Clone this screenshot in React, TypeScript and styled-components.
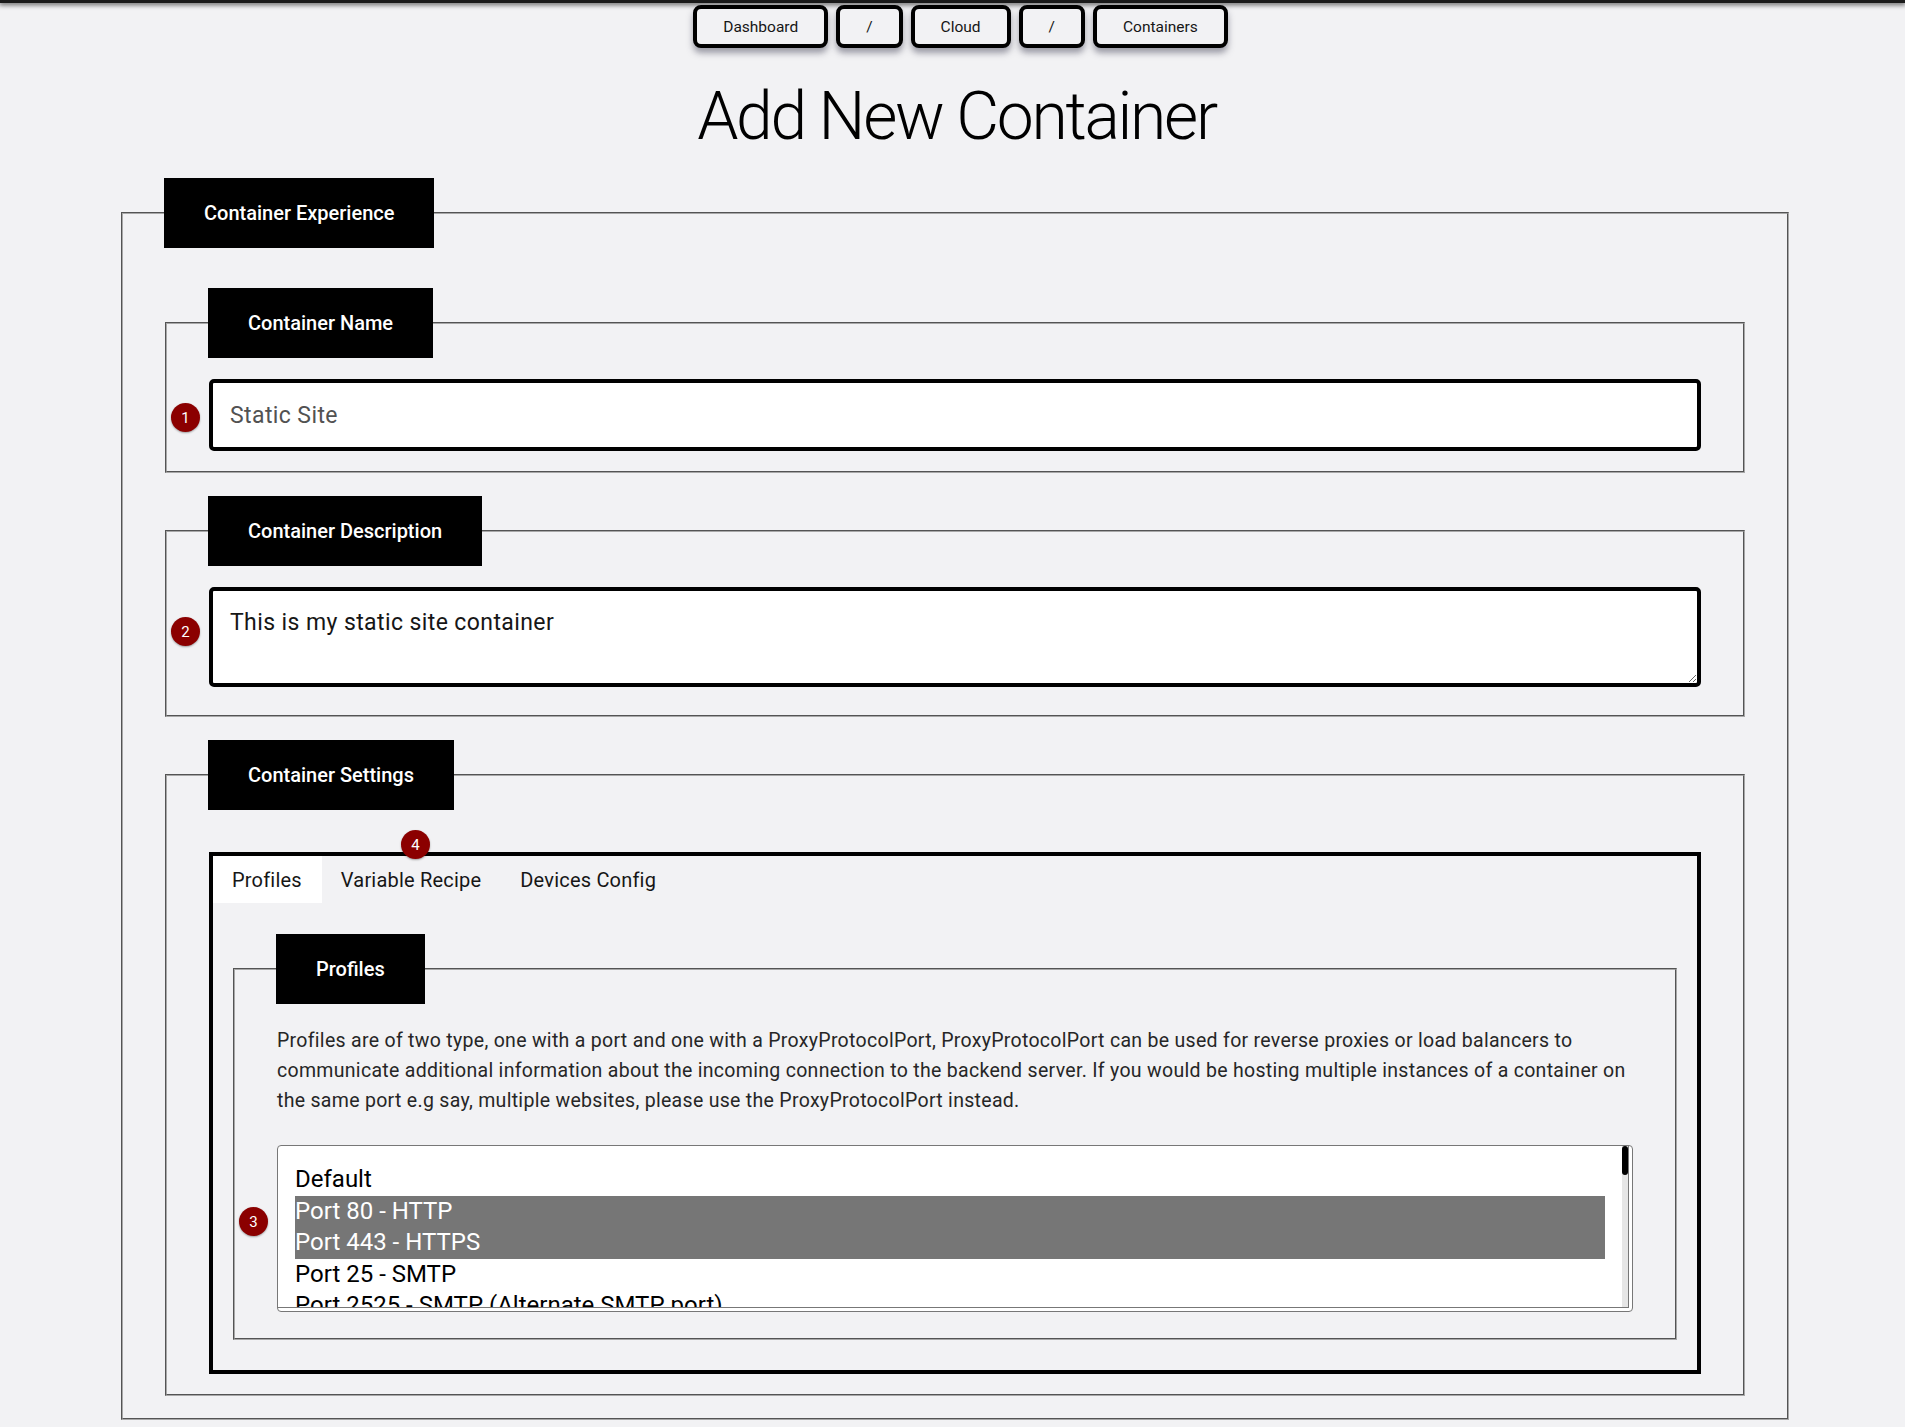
import React from 'react';
import styled, { createGlobalStyle } from 'styled-components';

const GlobalStyle = createGlobalStyle`
  html, body {
    margin: 0;
    padding: 0;
    background: #f2f2f4;
  }

  body {
    font-family: Roboto, 'Liberation Sans', sans-serif;
    color: #161616;
  }

  * {
    box-sizing: border-box;
  }
`;

// header

const Page = styled.div`
  min-height: 1427px;
  padding-bottom: 6px;
`;

const TopShade = styled.div`
  height: 3px;
  background: #1a1a1a;
  box-shadow: 0 1px 5px 1px rgba(0, 0, 0, 0.6);
`;

const Crumbs = styled.nav`
  display: flex;
  justify-content: center;
  gap: 8px;
  margin-top: 2px;
  padding-left: 16px;
`;

const Crumb = styled.button`
  height: 43px;
  padding: 0 26px;
  border: 4px solid #000;
  border-radius: 8px;
  background: #f2f2f4;
  box-shadow: 0 5px 6px rgba(70, 70, 90, 0.5);
  font-family: Roboto, 'Liberation Sans', sans-serif;
  font-size: 15.5px;
  color: #161616;
  cursor: pointer;
`;

const Title = styled.h1`
  margin: 36px 0 28px;
  padding-left: 8px;
  text-align: center;
  font-size: 66px;
  line-height: 1;
  font-weight: 300;
  letter-spacing: -2.3px;
  color: #000;
`;

// form sections

const Fieldset = styled.fieldset<{ $top?: number; $bottom?: number }>`
  margin: 0;
  min-width: 0;
  border: 2px groove #a8a8a8;
  padding: ${(p) => p.$top ?? 21}px 42px ${(p) => p.$bottom ?? 20}px;

  & + & {
    margin-top: 23px;
  }
`;

const Outer = styled(Fieldset)`
  margin: 0 116px 0 121px;
`;

const Legend = styled.legend`
  background: #000;
  color: #fff;
  padding: 24px 40px;
  margin-left: -1px;
  line-height: 22px;
  font-size: 20px;
  font-weight: 500;
`;

const Field = styled.div`
  position: relative;
`;

const Badge = styled.span<{ $left: number; $top: number }>`
  position: absolute;
  left: ${(p) => p.$left}px;
  top: ${(p) => p.$top}px;
  width: 29px;
  height: 29px;
  border-radius: 50%;
  background: #8b0000;
  color: #fff;
  font-size: 15px;
  display: flex;
  align-items: center;
  justify-content: center;
  box-shadow: 0 1px 2px rgba(0, 0, 0, 0.35);
  z-index: 2;
`;

const TextInput = styled.input`
  display: block;
  width: 100%;
  height: 72px;
  border: 4px solid #000;
  border-radius: 5px;
  background: #fff;
  padding: 0 17px;
  font-family: Roboto, 'Liberation Sans', sans-serif;
  font-size: 23px;
  letter-spacing: 0.4px;
  color: #161616;

  &::placeholder {
    color: #525252;
  }
`;

const TextArea = styled.textarea`
  display: block;
  width: 100%;
  height: 100px;
  margin-bottom: 8px;
  border: 4px solid #000;
  border-radius: 5px;
  background: #fff;
  padding: 17px 17px 15px;
  font-family: Roboto, 'Liberation Sans', sans-serif;
  font-size: 23px;
  letter-spacing: 0.4px;
  line-height: 30px;
  color: #161616;
  resize: vertical;
`;

// tabs

const TabsBox = styled.div`
  position: relative;
  margin-top: 21px;
  border: 4px solid #000;
`;

const TabList = styled.div`
  display: flex;
`;

const Tab = styled.button<{ $active?: boolean }>`
  height: 47px;
  padding: 0 20px 0 19px;
  border: none;
  background: ${(p) => (p.$active ? '#fff' : 'transparent')};
  font-family: Roboto, 'Liberation Sans', sans-serif;
  font-size: 20px;
  letter-spacing: 0.2px;
  color: #161616;
  cursor: pointer;
`;

const TabPanel = styled.div`
  padding: 31px 20px 30px;
`;

const Text = styled.p`
  margin: 2px 0 29px;
  font-size: 19.5px;
  letter-spacing: 0.3px;
  line-height: 30px;
  white-space: nowrap;
  color: #262626;
`;

// profile list

const ListFrame = styled.div`
  height: 167px;
  padding: 0 3px 3px 0;
  background: #fff;
  border: 1px solid #777;
  border-radius: 4px;
`;

const ListInner = styled.div`
  display: flex;
  height: 100%;
  border-right: 1px solid #777;
  border-bottom: 1px solid #777;
`;

const ListBox = styled.ul`
  flex: 1;
  list-style: none;
  margin: 0;
  padding: 18px 17px 0 17px;
  overflow: hidden;
`;

const ScrollTrack = styled.div`
  width: 6px;
  background: #e6e6e6;
`;

const ScrollThumb = styled.div`
  height: 29px;
  background: #000;
  border-radius: 3px;
`;

const Option = styled.li<{ $selected?: boolean }>`
  font-size: 24px;
  line-height: 31.5px;
  white-space: nowrap;
  color: ${(p) => (p.$selected ? '#fff' : '#000')};
  background: ${(p) => (p.$selected ? '#767676' : 'transparent')};
`;

const ports = [
  'Default',
  'Port 80 - HTTP',
  'Port 443 - HTTPS',
  'Port 25 - SMTP',
  'Port 2525 - SMTP (Alternate SMTP port)',
  'Port 465 - SMTPS',
  'Port 587 - SMTP Submission',
  'Port 21 - FTP',
  'Port 22 - SSH',
  'Port 53 - DNS',
  'Port 3306 - MySQL',
  'Port 5432 - PostgreSQL',
];

const selected = ['Port 80 - HTTP', 'Port 443 - HTTPS'];

export default function App() {
  return (
    <Page>
      <GlobalStyle />
      <TopShade />
      <Crumbs>
        <Crumb>Dashboard</Crumb>
        <Crumb>/</Crumb>
        <Crumb>Cloud</Crumb>
        <Crumb>/</Crumb>
        <Crumb>Containers</Crumb>
      </Crumbs>
      <Title>Add New Container</Title>

      <Outer $top={40} $bottom={22}>
        <Legend>Container Experience</Legend>

        <Fieldset>
          <Legend>Container Name</Legend>
          <Field>
            <Badge $left={-38} $top={24}>1</Badge>
            <TextInput placeholder='Static Site' />
          </Field>
        </Fieldset>

        <Fieldset>
          <Legend>Container Description</Legend>
          <Field>
            <Badge $left={-38} $top={30}>2</Badge>
            <TextArea defaultValue='This is my static site container' />
          </Field>
        </Fieldset>

        <Fieldset>
          <Legend>Container Settings</Legend>
          <TabsBox>
            <Badge $left={188} $top={-26}>4</Badge>
            <TabList>
              <Tab $active>Profiles</Tab>
              <Tab>Variable Recipe</Tab>
              <Tab>Devices Config</Tab>
            </TabList>
            <TabPanel>
              <Fieldset $top={20} $bottom={26}>
                <Legend>Profiles</Legend>
                <Text>
                  Profiles are of two type, one with a port and one with a
                  ProxyProtocolPort, ProxyProtocolPort can be used for reverse
                  proxies or load balancers to
                  <br />
                  communicate additional information about the incoming
                  connection to the backend server. If you would be hosting
                  multiple instances of a container on
                  <br />
                  the same port e.g say, multiple websites, please use the
                  ProxyProtocolPort instead.
                </Text>
                <Field>
                  <Badge $left={-38} $top={62}>3</Badge>
                  <ListFrame>
                    <ListInner>
                      <ListBox>
                        {ports.map((port) => (
                          <Option key={port} $selected={selected.includes(port)}>
                            {port}
                          </Option>
                        ))}
                      </ListBox>
                      <ScrollTrack>
                        <ScrollThumb />
                      </ScrollTrack>
                    </ListInner>
                  </ListFrame>
                </Field>
              </Fieldset>
            </TabPanel>
          </TabsBox>
        </Fieldset>
      </Outer>
    </Page>
  );
}
